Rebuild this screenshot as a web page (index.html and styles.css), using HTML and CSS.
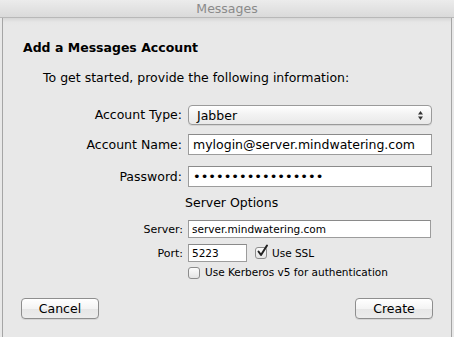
FILE: index.html
```html
<!DOCTYPE html>
<html>
<head>
<meta charset="utf-8">
<link rel="stylesheet" href="styles.css">
</head>
<body>
<div class="titlebar">Messages</div>
<div class="sheet">
  <h1 class="heading">Add a Messages Account</h1>
  <p class="intro">To get started, provide the following information:</p>
  <div class="form">
    <label class="label">Account Type:</label>
    <div class="popup">
      <span>Jabber</span>
      <svg class="arrows" width="7" height="11" viewBox="0 0 7 11"><path d="M3.5 1 L6 4.5 L1 4.5 Z M3.5 10 L6 6.5 L1 6.5 Z" fill="#333"/></svg>
    </div>
    <label class="label row-name">Account Name:</label>
    <div class="field row-name">mylogin@server.mindwatering.com</div>
    <label class="label row-pass">Password:</label>
    <div class="field row-pass dots">•••••••••••••••••</div>
  </div>
  <div class="section">Server Options</div>
  <div class="small-form">
    <label class="slabel">Server:</label>
    <div class="sfield">server.mindwatering.com</div>
    <label class="slabel">Port:</label>
    <div class="port-row">
      <div class="sfield port">5223</div>
      <span class="check">
        <span class="box"><svg class="tick" width="13" height="14" viewBox="0 0 13 14"><path d="M2.5 7.5 L5 11 L11 1.5" fill="none" stroke="#222" stroke-width="2" stroke-linecap="round" stroke-linejoin="round"/></svg></span>
        Use SSL
      </span>
    </div>
    <span></span>
    <span class="check kerb"><span class="box"></span>Use Kerberos v5 for authentication</span>
  </div>
  <div class="buttons">
    <button class="btn">Cancel</button>
    <button class="btn">Create</button>
  </div>
</div>
</body>
</html>
```
FILE: styles.css
```css
html, body {
  margin: 0;
  padding: 0;
  background: #e8e8e8;
  width: 454px;
  height: 337px;
  overflow: hidden;
  font-family: "DejaVu Sans", "Liberation Sans", sans-serif;
  color: #000;
}
.titlebar {
  height: 18px;
  line-height: 17px;
  text-align: center;
  font-size: 12.5px;
  color: #8a8a8a;
  background: linear-gradient(#ececec, #dadada);
  border-bottom: 1px solid #b8b8b8;
  box-sizing: border-box;
}
.sheet {
  margin: 0 2px;
  height: 319px;
  box-sizing: border-box;
  border-left: 1px solid #a5a5a5;
  border-right: 1px solid #a5a5a5;
  background: linear-gradient(#d6d6d6 0, #e6e6e6 4px, #e8e8e8 8px);
  padding: 22px 0 0 0;
}
.heading {
  margin: 0 0 0 20px;
  font-size: 12.5px;
  line-height: 16px;
  font-weight: bold;
}
.intro {
  margin: 14px 0 0 40px;
  font-size: 12.5px;
  line-height: 16px;
}
.form {
  display: grid;
  grid-template-columns: 179px 244px;
  column-gap: 6px;
  margin-top: 19px;
  font-size: 12.5px;
  align-items: center;
}
.label {
  text-align: right;
  line-height: 16px;
}
.popup {
  height: 20px;
  box-sizing: border-box;
  border: 1px solid #9a9a9a;
  border-radius: 4px;
  background: linear-gradient(#ffffff, #f2f2f2 50%, #e9e9e9);
  display: flex;
  align-items: center;
  justify-content: space-between;
  padding: 0 7px 0 8px;
  box-shadow: 0 1px 0 rgba(0,0,0,0.08);
}
.arrows { display: block; }
.field {
  height: 21px;
  box-sizing: border-box;
  border: 1px solid #9c9c9c;
  border-top-color: #8a8a8a;
  background: #fff;
  padding: 0 4px;
  line-height: 19px;
  white-space: nowrap;
  overflow: hidden;
}
.row-name { margin-top: 9px; }
.row-pass { margin-top: 11px; }
.dots {
  font-size: 13px;
  letter-spacing: 0;
}
.section {
  margin: 8px 0 0 182px;
  font-size: 12.5px;
  line-height: 16px;
}
.small-form {
  display: grid;
  grid-template-columns: 180px 243px;
  column-gap: 5px;
  row-gap: 6px;
  margin-top: 9px;
  font-size: 10.5px;
  align-items: center;
}
.slabel { text-align: right; font-size: 11px; }
.sfield {
  height: 18px;
  box-sizing: border-box;
  border: 1px solid #9c9c9c;
  border-top-color: #8a8a8a;
  background: #fff;
  padding: 0 3px;
  line-height: 16px;
}
.port-row {
  display: flex;
  align-items: center;
  gap: 8px;
}
.port { width: 59px; }
.check {
  display: flex;
  align-items: center;
  gap: 5px;
  font-size: 10.5px;
  line-height: 13px;
}
.kerb { margin-top: -2px; }
.box {
  position: relative;
  width: 12px;
  height: 12px;
  box-sizing: border-box;
  border: 1px solid #8c8c8c;
  border-radius: 3px;
  background: linear-gradient(#fcfcfc, #e4e4e4);
}
.tick {
  position: absolute;
  left: 0;
  top: -4px;
}
.buttons {
  display: flex;
  justify-content: space-between;
  margin-top: 19px;
  padding: 0 18px 0 18px;
}
.btn {
  width: 78px;
  height: 21px;
  box-sizing: border-box;
  border: 1px solid #8e8e8e;
  border-radius: 4px;
  background: linear-gradient(#ffffff, #f4f4f4 50%, #e6e6e6 51%, #ececec);
  font-family: "DejaVu Sans", "Liberation Sans", sans-serif;
  font-size: 12.5px;
  color: #000;
  padding: 0;
  line-height: 18px;
  box-shadow: 0 1px 0 rgba(0,0,0,0.08);
}
```
